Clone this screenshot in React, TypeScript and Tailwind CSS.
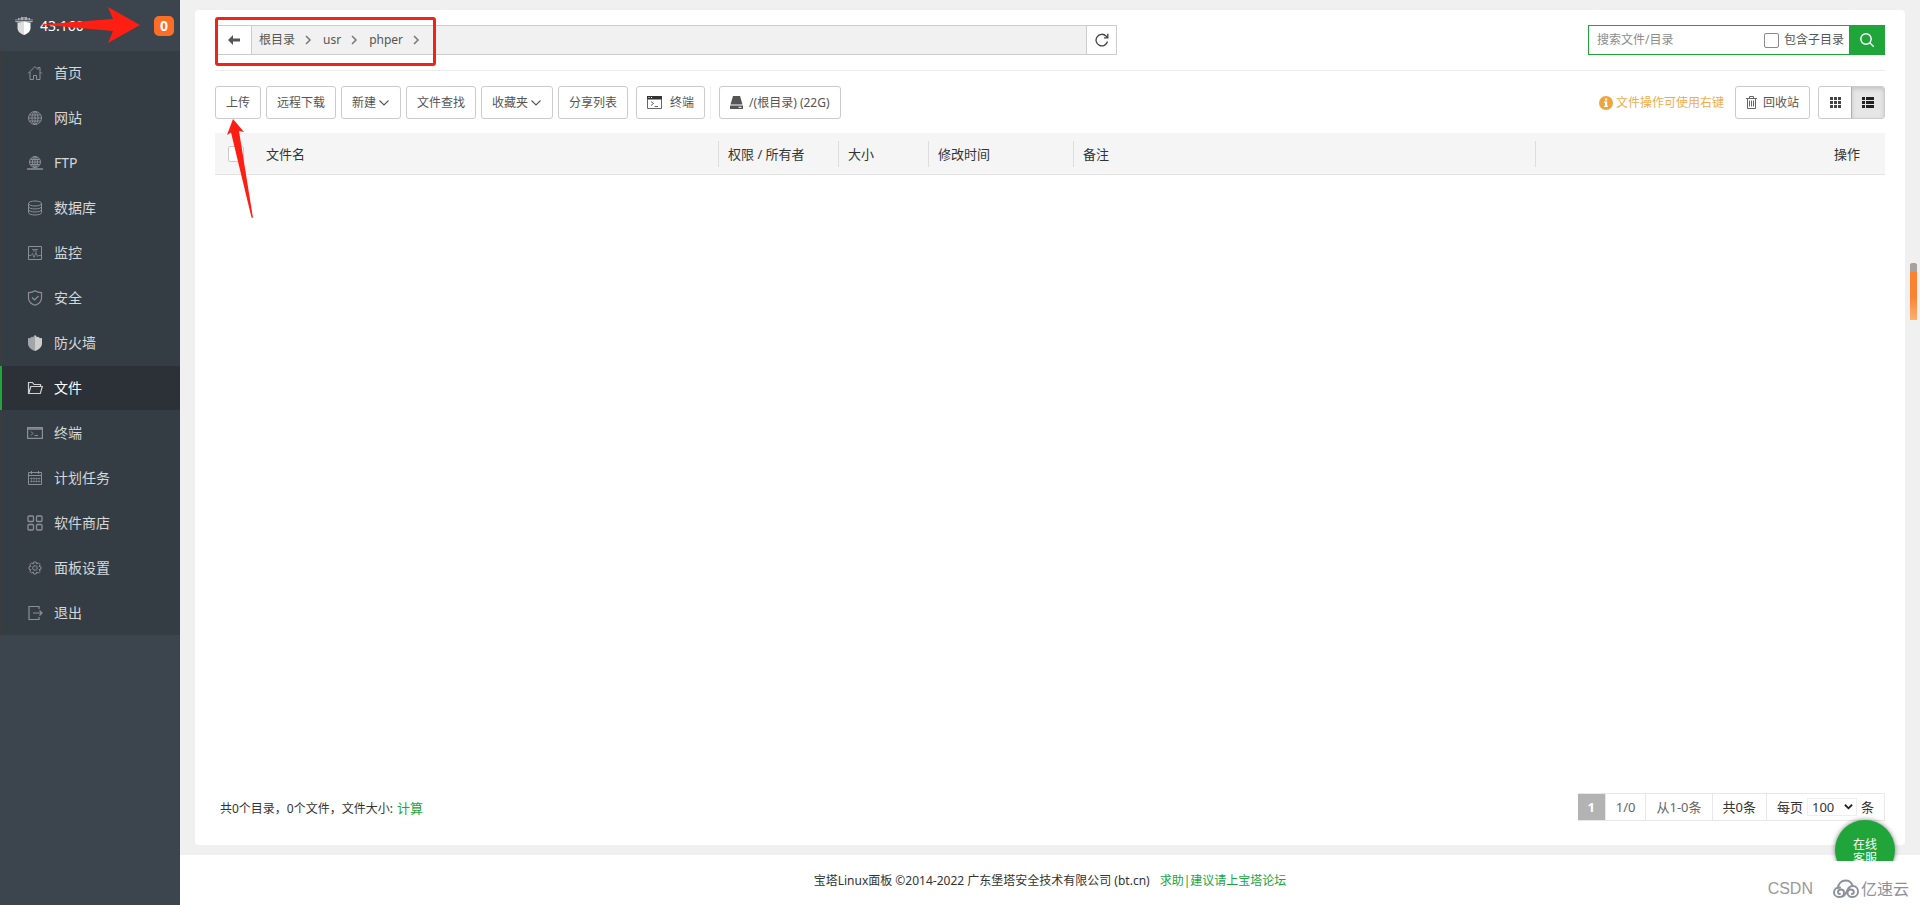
import { useState } from 'react'
import type { ReactNode } from 'react'

interface MenuItem {
  name: string
  icon: ReactNode
}

function LineIcon({ children }: { children: ReactNode }) {
  return (
    <svg viewBox="0 0 16 16" className="w-4 h-4 shrink-0" fill="none" stroke="currentColor" strokeWidth="1" aria-hidden="true">
      {children}
    </svg>
  )
}

const menu: MenuItem[] = [
  {
    name: '首页',
    icon: <LineIcon><path d="M1 8.5 8 1.5l3 3V2.5h2v4l2 2M3 7v7.5h3.5v-4h3v4H13V7" /></LineIcon>,
  },
  {
    name: '网站',
    icon: <LineIcon><circle cx="8" cy="8" r="6.5" /><ellipse cx="8" cy="8" rx="3" ry="6.5" /><path d="M8 1.5v13M1.5 8h13M2.5 5h11M2.5 11h11" /></LineIcon>,
  },
  {
    name: 'FTP',
    icon: <LineIcon><circle cx="8" cy="7" r="5.5" /><ellipse cx="8" cy="7" rx="2.5" ry="5.5" /><path d="M8 1.5v12M2.5 7h11M3.5 4.5h9M3.5 9.5h9" /><path strokeWidth="1.5" d="M0 14h16M6 14h4" /></LineIcon>,
  },
  {
    name: '数据库',
    icon: <LineIcon><ellipse cx="8" cy="3.5" rx="6.5" ry="2.5" /><path d="M1.5 3.5v9c0 3.3 13 3.3 13 0v-9M1.5 6.5c0 3.3 13 3.3 13 0M1.5 9.5c0 3.3 13 3.3 13 0" /></LineIcon>,
  },
  {
    name: '监控',
    icon: <LineIcon><path d="M1.5 1.5h13v13h-13z" /><path strokeWidth=".8" d="M1.5 10.5H4l1.500-2 1.500 4 2-5 1.500 4 1-1h3M5 4.500h6M6 6h4" /></LineIcon>,
  },
  {
    name: '安全',
    icon: <LineIcon><path strokeWidth="1.2" d="M8 .8c2 1.300 4.500 1.800 6.500 1.900V8c0 3.500-3 6-6.500 7.300C4.500 14 1.500 11.500 1.500 8V2.700C3.500 2.600 6 2.100 8 .8z" /><path strokeWidth="1.2" d="m5 7.500 2.500 2.500L11.500 6" /></LineIcon>,
  },
  {
    name: '防火墙',
    icon: (
      <svg viewBox="0 0 16 16" className="w-4 h-4 shrink-0" aria-hidden="true">
        <path fill="#a3a6a9" d="M8 0 6.500 1.200v1L5 1.800 3.500 2.500v.8L1 3v5.500C1 12 4 14.500 8 16z" />
        <path fill="#cdcdcd" d="m8 0 1.500 1.200v1l1.500-.4 1.500.7v.8L15 3v5.500C15 12 12 14.500 8 16z" />
      </svg>
    ),
  },
  {
    name: '文件',
    icon: <LineIcon><path strokeWidth="1.2" d="M3 13.500H1.500v-11h4l1.500 2h6.500v2M1.800 13.500l2-7h11.500l-2 7z" /></LineIcon>,
  },
  {
    name: '终端',
    icon: <LineIcon><path strokeWidth="1.2" d="M.6 2.600h14.800v10.800H.6z" /><path strokeWidth="1.5" d="M.5 4h15" /><path d="M4 6.500 6 8.500l-2 2M7.500 10.500H11" /></LineIcon>,
  },
  {
    name: '计划任务',
    icon: <LineIcon><path d="M1.500 2.500h13v12h-13zM1.500 5.500h13M4.500 1v3M11.500 1v3" /><path strokeWidth=".6" d="M4.500 7.500v5M7 7.500v5M9.500 7.500v5M12 7.500v5M3 8.500h10.500M3 11.500h10.500" /></LineIcon>,
  },
  {
    name: '软件商店',
    icon: <LineIcon><g strokeWidth="1.3"><rect x="1" y="1" width="5.5" height="5.5" rx="1" /><rect x="9.5" y="1" width="5.5" height="5.5" rx="1" /><rect x="1" y="9.5" width="5.5" height="5.5" rx="1" /><rect x="9.5" y="9.5" width="5.5" height="5.5" rx="1" /></g></LineIcon>,
  },
  {
    name: '面板设置',
    icon: <LineIcon><path strokeLinejoin="round" d="M6.800 1h2.400l.5 1.900 1.700-1 1.700 1.700-1 1.700 1.900.5v2.400l-1.900.5 1 1.700-1.700 1.700-1.700-1-.5 1.900H6.800l-.5-1.900-1.700 1-1.700-1.700 1-1.700L2 8.200V5.800l1.900-.5-1-1.700 1.700-1.700 1.700 1z" transform="translate(0 1)" /><circle cx="8" cy="8" r="2.3" /></LineIcon>,
  },
  {
    name: '退出',
    icon: <LineIcon><path strokeWidth="1.2" d="M12 4V1.500H2v13h10V12M6 8h9M12.500 5.500 15 8l-2.500 2.500" /></LineIcon>,
  },
]

const crumbs = ['根目录', 'usr', 'phper']

const btn = 'h-[33px] px-[10px] flex items-center border border-[#ccc] rounded-[3px] bg-white text-xs text-[#555] whitespace-nowrap'

function Chevron() {
  return (
    <svg viewBox="0 0 10 10" className="w-[10px] h-[10px]" fill="none" stroke="#777" strokeWidth="1.5" aria-hidden="true">
      <path d="m3 1 4 4-4 4" />
    </svg>
  )
}

function Caret() {
  return (
    <svg viewBox="0 0 12 12" className="w-3 h-3" fill="none" stroke="#555" strokeWidth="1.1" aria-hidden="true">
      <path d="M1.500 3.500 6 8l4.500-4.500" />
    </svg>
  )
}

function Sidebar({ active, onSelect }: { active: string; onSelect: (name: string) => void }) {
  return (
    <aside className="relative w-[180px] shrink-0 bg-[#3c444d]">
      <div className="h-[51px] flex items-center pl-[15px] pr-[6px]">
        <svg viewBox="0 0 18 20" className="w-[18px] h-5 shrink-0" aria-hidden="true">
          <path fill="#a9acaf" d="M0 5.500V3.500h3V2h3V1h6v1h3v1.500h3v2l-2 1H2z" />
          <path stroke="#3c444d" strokeWidth=".7" d="M0 4.500h18M5 2v2.500M9 1v4M13 2v2.500" />
          <path fill="#ddd" d="M2.500 7 9 5.500V19c-4-1.500-6.500-3.500-6.500-7z" />
          <path fill="#fff" d="M15.500 7 9 5.500V19c4-1.500 6.500-3.500 6.500-7z" />
        </svg>
        <span className="ml-[7px] text-sm text-white">43.160</span>
        <span className="ml-auto w-5 h-5 rounded-[5px] bg-[#fc6d26] text-white text-sm font-bold leading-5 text-center">0</span>
      </div>
      <nav className="bg-[#353d44] border-l-2 border-[#3a3c3e]">
        {menu.map(m => (
          <a
            key={m.name}
            href="#"
            onClick={() => onSelect(m.name)}
            className={
              m.name === active
                ? '-ml-[2px] border-l-2 border-[#20a53a] h-11 mb-px pl-[25px] flex items-center gap-[11px] text-sm bg-[#2c3138] text-white'
                : 'h-11 mb-px pl-[25px] flex items-center gap-[11px] text-sm text-[#d6d7d9]'
            }
          >
            <span className={m.name === active ? 'text-[#d0d0d0]' : 'text-[#8b9095]'}>{m.icon}</span>
            {m.name}
          </a>
        ))}
      </nav>
      {/* 标注箭头 */}
      <svg viewBox="0 0 100 36" className="absolute left-10 top-[7px] w-[100px] h-9" aria-hidden="true">
        <path fill="#ff1f12" d="M0 17.500 73 12 68 0l32 18-32 18 5-12z" />
      </svg>
    </aside>
  )
}

function PathBar() {
  return (
    <div className="relative w-[902px] h-[30px] flex border border-[#ccc] bg-[#f1f1f1] text-xs text-[#555]">
      <button type="button" aria-label="返回" className="w-9 bg-white border-r border-[#ccc] flex items-center justify-center">
        <svg viewBox="0 0 12 10" className="w-3 h-[10px]" fill="#555" aria-hidden="true">
          <path d="M0 5 5 0v3.500h7v3H5V10z" />
        </svg>
      </button>
      <ol className="flex-1 flex items-center pl-[7px]">
        {crumbs.map(c => (
          <li key={c} className="flex items-center gap-2 mr-[10px]">
            <a href="#">{c}</a>
            <Chevron />
          </li>
        ))}
      </ol>
      <button type="button" aria-label="刷新" className="w-[30px] bg-white border-l border-[#ccc] flex items-center justify-center">
        <svg viewBox="0 0 14 14" className="w-[14px] h-[14px]" fill="none" stroke="#444" strokeWidth="1.3" aria-hidden="true">
          <path d="M12.500 8.500A5.800 5.800 0 1 1 11 3L12.500 4.500" />
          <path d="M12.800.8v4H9" />
        </svg>
      </button>
      <div className="absolute -left-px -top-[9px] w-[221px] h-[49px] border-[3px] border-[#ee2419] rounded-[3px] pointer-events-none" />
    </div>
  )
}

function SearchBox() {
  const [keyword, setKeyword] = useState('')
  return (
    <form className="h-[30px] w-[297px] flex" onSubmit={e => e.preventDefault()}>
      <div className="flex-1 min-w-0 flex items-center border border-r-0 border-[#20a53a] pl-2 pr-[5px]">
        <input
          type="text"
          aria-label="搜索文件/目录"
          value={keyword}
          onChange={e => setKeyword(e.target.value)}
          placeholder="搜索文件/目录"
          className="flex-1 min-w-0 text-xs text-[#555] placeholder-[#8c8c8c] outline-none"
        />
        <input id="sub-dir" type="checkbox" className="appearance-none w-[15px] h-[15px] mr-[5px] border border-[#888] rounded-[2px] bg-white" />
        <label htmlFor="sub-dir" className="text-xs text-[#555]">包含子目录</label>
      </div>
      <button type="submit" aria-label="搜索" className="w-9 bg-[#20a53a] flex items-center justify-center">
        <svg viewBox="0 0 14 14" className="w-[14px] h-[14px]" fill="none" stroke="#fff" strokeWidth="1.4" aria-hidden="true">
          <circle cx="6" cy="6" r="5.2" />
          <path d="m9.800 9.800 4 4" />
        </svg>
      </button>
    </form>
  )
}

function Toolbar() {
  return (
    <div className="relative flex items-start justify-between pt-[15px]">
      <div className="flex items-center gap-[5px]">
        <button type="button" className={btn}>上传</button>
        <button type="button" className={btn}>远程下载</button>
        <button type="button" className={`${btn} gap-[2px]`}>新建<Caret /></button>
        <button type="button" className={btn}>文件查找</button>
        <button type="button" className={`${btn} gap-[2px]`}>收藏夹<Caret /></button>
        <button type="button" className={btn}>分享列表</button>
        <div className="flex items-center h-[33px] ml-[3px] pr-[5px] border-r border-[#eee]">
          <button type="button" className={`${btn} gap-2`}>
            <svg viewBox="0 0 15 13" className="w-[15px] h-[13px]" fill="none" stroke="#666" strokeWidth="1" aria-hidden="true">
              <path fill="#333" stroke="none" d="M0 0h15v3.500H0z" />
              <path stroke="#fff" d="M1.500 1.500h1M4 1.500h1" />
              <path d="M.5 3v9.500h14V3M4 5.500l2.500 2L4 9.500M7.500 10.500H11" />
            </svg>
            终端
          </button>
        </div>
        <button type="button" className={`${btn} ml-[3px] gap-[6px]`}>
          <svg viewBox="0 0 13 13" className="w-[13px] h-[13px]" fill="#555" aria-hidden="true">
            <path d="M3 0h7l2.500 8.500H.5zM0 9.500h13V13H0z" />
            <path stroke="#fff" d="M8.500 11.300h3" />
          </svg>
          /(根目录) (22G)
        </button>
      </div>
      <div className="flex items-center">
        <span className="flex items-center gap-[3px] mr-[11px] text-xs text-[#f0ad4e]">
          <svg viewBox="0 0 14 14" className="w-[14px] h-[14px]" aria-hidden="true">
            <circle cx="7" cy="7" r="7" fill="#eda53d" />
            <path fill="#fff" d="M6 2.500h2.200v2H6zM5 5.500h3.200v4.200H9V11H5V9.700h1V6.800H5z" />
          </svg>
          文件操作可使用右键
        </span>
        <button type="button" className={`${btn} gap-[6px]`}>
          <svg viewBox="0 0 11 13" className="w-[11px] h-[13px]" fill="none" stroke="#666" strokeWidth="1" aria-hidden="true">
            <path d="M0 2.500h11M3.500 2.500v-2h4v2M1.500 2.500v10h8v-10M3.500 4.500v6M5.500 4.500v6M7.500 4.500v6" />
          </svg>
          回收站
        </button>
        <div className="ml-2 flex h-[33px] border border-[#ccc] rounded-[3px]">
          <button type="button" aria-label="图标视图" className="w-8 flex items-center justify-center">
            <svg viewBox="0 0 11 11" className="w-[11px] h-[11px]" fill="#444" aria-hidden="true">
              <path d="M0 0h3v3H0zM4 0h3v3H4zM8 0h3v3H8zM0 4h3v3H0zM4 4h3v3H4zM8 4h3v3H8zM0 8h3v3H0zM4 8h3v3H4zM8 8h3v3H8z" />
            </svg>
          </button>
          <button type="button" aria-label="列表视图" className="w-[33px] flex items-center justify-center bg-[#e6e6e6] border-l border-[#adadad] rounded-r-[2px] shadow-[inset_0_2px_4px_rgba(0,0,0,0.15)]">
            <svg viewBox="0 0 12 11" className="w-3 h-[11px]" fill="#222" aria-hidden="true">
              <path d="M0 0h3v3H0zM4 0h8v3H4zM0 4h3v3H0zM4 4h8v3H4zM0 8h3v3H0zM4 8h8v3H4z" />
            </svg>
          </button>
        </div>
      </div>
      {/* 标注箭头 */}
      <svg viewBox="0 0 28 100" className="absolute left-3 top-12 w-7 h-[100px]" aria-hidden="true">
        <path fill="#ff1f12" d="M6 0 17 13l-5-1 14 87-1.500-.5L4 13.500 0 16z" />
      </svg>
    </div>
  )
}

function FileTable() {
  const cell = 'h-[26px] pl-[9px] border-l border-[#ddd] flex items-center'
  return (
    <table className="w-full table-fixed mt-[14px] text-[13px] text-[#333]">
      <colgroup>
        <col className="w-[41px]" />
        <col />
        <col className="w-[120px]" />
        <col className="w-[90px]" />
        <col className="w-[145px]" />
        <col />
        <col className="w-[350px]" />
      </colgroup>
      <thead>
        <tr className="h-[41px] bg-[#f5f5f5] border-b border-[#e3e3e3] [&>th]:px-0 [&>th]:pt-[2px] [&>th]:pb-0 [&>th]:font-normal">
          <th>
            <input type="checkbox" aria-label="全选" className="block appearance-none w-4 h-4 ml-[13px] border border-[#ccc] rounded-[2px] bg-white" />
          </th>
          <th><div className="pl-[10px] text-left">文件名</div></th>
          <th><div className={cell}>权限 / 所有者</div></th>
          <th><div className={cell}>大小</div></th>
          <th><div className={cell}>修改时间</div></th>
          <th><div className={cell}>备注</div></th>
          <th><div className="h-[26px] pr-[25px] border-l border-[#ddd] flex items-center justify-end">操作</div></th>
        </tr>
      </thead>
    </table>
  )
}

function Pagination() {
  const [size, setSize] = useState('100')
  return (
    <div className="h-7 flex items-center text-[13px] text-[#333] [&>*]:h-7 [&>*]:flex [&>*]:items-center [&>*]:border-y [&>*]:border-r [&>*]:border-[#e8e8e8]">
      <span className="w-7 justify-center bg-[#b3b3b3] text-white font-bold">1</span>
      <span className="px-[10px] text-[#666]">1/0</span>
      <span className="px-[10px] text-[#666]">从1-0条</span>
      <span className="px-[10px]">共0条</span>
      <span className="px-[10px]">
        <label htmlFor="page-size">每页</label>
        <span className="relative mx-1 flex items-center">
          <select
            id="page-size"
            value={size}
            onChange={e => setSize(e.target.value)}
            className="appearance-none w-[50px] h-[18px] pl-1 border border-[#eee] bg-white leading-4"
          >
            <option>100</option>
            <option>200</option>
            <option>500</option>
          </select>
          <svg viewBox="0 0 10 6" className="absolute right-1 w-[9px] h-[6px] pointer-events-none" fill="none" stroke="#222" strokeWidth="2" aria-hidden="true">
            <path d="m1 .5 4 4 4-4" />
          </svg>
        </span>
        条
      </span>
    </div>
  )
}

export default function App() {
  const [active, setActive] = useState('文件')

  return (
    <div className="relative min-h-screen flex bg-[#f0f0f0] font-['Noto_Sans','Noto_Sans_CJK_SC',sans-serif] leading-5">
      <Sidebar active={active} onSelect={setActive} />

      <div className="flex-1 min-w-0 flex flex-col">
        <main className="flex-1 flex flex-col mt-[10px] mx-[15px] mb-[10px] px-5 rounded-[4px] bg-white">
          <div className="flex justify-between pt-[15px] pb-[15px] border-b border-[#eee]">
            <PathBar />
            <SearchBox />
          </div>
          <Toolbar />
          <FileTable />
          <div className="mt-auto mb-6 flex items-end justify-between">
            <p className="pl-[5px] pb-[2px] text-xs leading-5 text-[#333]">
              共0个目录，0个文件，文件大小: <a href="#" className="ml-px text-[13px] text-[#20a53a]">计算</a>
            </p>
            <Pagination />
          </div>
        </main>

        <footer className="relative z-10 h-[50px] pt-[2px] flex items-center justify-center bg-white text-xs text-[#333]">
          宝塔Linux面板 ©2014-2022 广东堡塔安全技术有限公司 (bt.cn)
          <a href="#" className="ml-[10px] text-[#20a53a]">求助|建议请上宝塔论坛</a>
          {/* 水印 */}
          <div className="absolute right-[11px] bottom-[6px] flex items-center gap-5 text-[#999]">
            <span className="text-base leading-5 font-['Liberation_Sans',sans-serif]">CSDN</span>
            <span className="flex items-center gap-[2px] text-base leading-5 text-[#8b919b]">
              <svg viewBox="0 0 26 20" className="w-[26px] h-5" fill="none" stroke="currentColor" strokeWidth="1.9" strokeLinecap="round" aria-hidden="true">
                <path d="M5 9C5 4.500 8.500 1.500 12.500 1.500c3.500 0 6 2 7 5" />
                <path d="M7 8.500c-3.500-.5-6 2-6 4.700C1 16 3.300 18 6 18c3 0 5-2 5-4.300 0-1.900-1.300-3.200-3-3.200s-3 1.200-3 2.600 1 1.900 2 1.900" />
                <path d="M9.500 17.500c3-1 3.500-3.500 5-6.500 1-2.500 3-4 5.300-4C23 7 25 9.600 25 12.500c0 3.100-2.300 5.500-5.500 5.500s-5-2-5-4.200c0-1.900 1.500-3.300 3.300-3.300s3 1.200 3 2.600-1 1.900-2 1.900" />
              </svg>
              亿速云
            </span>
          </div>
        </footer>
      </div>

      {/* 在线客服 */}
      <div className="absolute right-[20px] bottom-11 w-[70px] h-[46px] overflow-hidden z-20">
        <button type="button" className="mt-[5px] ml-[5px] pt-1 w-[60px] h-[60px] rounded-full bg-[#20a53a] text-white text-xs leading-[14px] shadow-[0_0_5px_rgba(0,0,0,0.5)]">
          在线<br />客服
        </button>
      </div>

      <div className="absolute right-[3px] top-[263px] w-[7px] h-[57px] rounded-t-[3px] bg-linear-to-b from-[#fa8231] from-60% to-[#fdb070] overflow-hidden">
        <div className="h-[9px] bg-[#a3a3a3]" />
      </div>
    </div>
  )
}
